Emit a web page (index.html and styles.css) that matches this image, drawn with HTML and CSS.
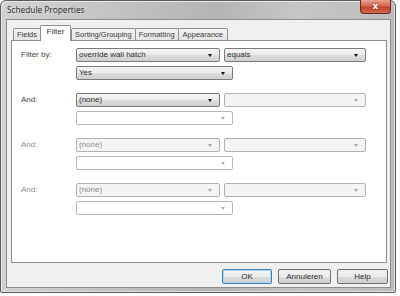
FILE: index.html
```html
<!DOCTYPE html>
<html>
<head>
<meta charset="utf-8">
<link rel="stylesheet" href="styles.css">
</head>
<body>
<div class="window">
  <div class="titlebar">
    <span class="title">Schedule Properties</span>
    <div class="close"><span>x</span></div>
  </div>
  <div class="client">
    <div class="tabs">
      <div class="tab">Fields</div>
      <div class="tab active">Filter</div>
      <div class="tab">Sorting/Grouping</div>
      <div class="tab">Formatting</div>
      <div class="tab">Appearance</div>
    </div>
    <div class="panel">
      <div class="group">
        <div class="label">Filter by:</div>
        <div class="combo c1"><span>override wall hatch</span><i class="arr"></i></div>
        <div class="combo c2"><span>equals</span><i class="arr"></i></div>
        <div class="combo box"><span>Yes</span><i class="arr"></i></div>
      </div>
      <div class="group">
        <div class="label">And:</div>
        <div class="combo c1"><span>(none)</span><i class="arr"></i></div>
        <div class="combo c2 dis"><span></span><i class="arr"></i></div>
        <div class="combo box edit"><span></span><i class="arr"></i></div>
      </div>
      <div class="group off">
        <div class="label">And:</div>
        <div class="combo c1 dis"><span>(none)</span><i class="arr"></i></div>
        <div class="combo c2 dis"><span></span><i class="arr"></i></div>
        <div class="combo box edit"><span></span><i class="arr"></i></div>
      </div>
      <div class="group off">
        <div class="label">And:</div>
        <div class="combo c1 dis"><span>(none)</span><i class="arr"></i></div>
        <div class="combo c2 dis"><span></span><i class="arr"></i></div>
        <div class="combo box edit"><span></span><i class="arr"></i></div>
      </div>
    </div>
    <div class="buttons">
      <div class="btn def">OK</div>
      <div class="btn wide">Annuleren</div>
      <div class="btn">Help</div>
    </div>
  </div>
</div>
</body>
</html>
```

FILE: styles.css
```css
html, body {
  margin: 0;
  padding: 0;
  background: #ffffff;
}
body {
  width: 400px;
  height: 296px;
  overflow: hidden;
  font-family: "Liberation Sans", Arial, sans-serif;
  font-size: 8px;
  color: #444444;
}
.window {
  width: 396px;
  height: 293px;
  box-sizing: border-box;
  border: 1px solid #5c5c5c;
  border-radius: 6px 6px 2px 2px;
  background: linear-gradient(to right, #d2d2d2 0%, #c2c2c2 30%, #b4b4b4 55%, #c6c6c6 75%, #bdbdbd 100%);
  box-shadow: inset 1px 1px 0 #e8e8e8, inset -1px -1px 0 #e0e0e0;
  padding: 0 4px 4px 5px;
  display: flex;
  flex-direction: column;
}
.titlebar {
  height: 19px;
  display: flex;
  align-items: flex-start;
  justify-content: space-between;
}
.title {
  font-family: "Open Sans", "Liberation Sans", sans-serif;
  font-size: 8.3px;
  color: #1e1e1e;
  padding: 3px 0 0 1px;
  text-shadow: 0 0 3px #eeeeee;
}
.close {
  width: 31px;
  height: 14px;
  margin-top: -1px;
  box-sizing: border-box;
  border: 1px solid #6b2a20;
  border-top: none;
  border-radius: 0 0 4px 4px;
  background: linear-gradient(to bottom, #e8a18f 0%, #d46a52 45%, #c2432a 55%, #cf6a4f 100%);
  display: flex;
  align-items: center;
  justify-content: center;
}
.close span {
  color: #ffffff;
  font-family: "DejaVu Sans", sans-serif;
  font-weight: bold;
  font-size: 9px;
  line-height: 9px;
  text-shadow: 0 0 2px #5a1a10;
}
.client {
  flex: 1;
  background: #f0f0f0;
  border: 1px solid #8c8c8c;
  padding: 5px 3px 3px 4px;
  display: flex;
  flex-direction: column;
}
.tabs {
  display: flex;
  align-items: flex-end;
  height: 15px;
  padding-left: 2px;
  position: relative;
  z-index: 1;
}
.tab {
  height: 12px;
  box-sizing: border-box;
  border: 1px solid #8e8f8f;
  border-bottom: none;
  margin-left: -1px;
  padding: 0 3px;
  background: linear-gradient(to bottom, #f4f4f4, #e4e4e4);
  font-size: 7.5px;
  line-height: 11px;
  color: #3a3a3a;
  border-radius: 2px 2px 0 0;
}
.tab:first-child {
  margin-left: 0;
  width: 28px;
  text-align: center;
  padding: 0;
}
.tab.active {
  height: 16px;
  margin-bottom: -1px;
  width: 31px;
  text-align: center;
  padding: 0;
  background: #ffffff;
  line-height: 12px;
  font-size: 8px;
}
.tab.active + .tab { margin-left: 0; }
.tab:last-child { padding: 0 4px; }
.panel {
  height: 223px;
  box-sizing: border-box;
  background: #ffffff;
  border: 1px solid #898c95;
  padding: 7px 0 0 9px;
  display: flex;
  flex-direction: column;
  gap: 13px;
}
.group {
  display: grid;
  grid-template-columns: 51px 144px 142px;
  column-gap: 4px;
  row-gap: 4px;
}
.label {
  line-height: 14px;
  color: #444444;
}
.off .label { color: #8d8d8d; }
.combo {
  height: 14px;
  box-sizing: border-box;
  border: 1px solid #7a7a7a;
  border-radius: 2px;
  background: linear-gradient(to bottom, #f3f3f3 0%, #ebebeb 50%, #dddddd 51%, #cfcfcf 100%);
  display: flex;
  align-items: center;
  justify-content: space-between;
  padding: 0 7px 0 2px;
  color: #2a2a2a;
  line-height: 12px;
}
.combo .arr {
  width: 0;
  height: 0;
  border-left: 2.5px solid transparent;
  border-right: 2.5px solid transparent;
  border-top: 3px solid #111111;
}
.combo.dis {
  border-color: #adb2b5;
  background: #f4f4f4;
  color: #8d8d8d;
}
.combo.dis .arr { border-top-color: #a6a6a6; }
.box {
  grid-column: 2 / 4;
  width: 157px;
}
.combo.edit {
  background: #ffffff;
  border-color: #b4b8bb;
}
.combo.edit .arr { border-top-color: #b0b0b0; }
.buttons {
  flex: 1;
  display: flex;
  justify-content: flex-end;
  align-items: flex-start;
  gap: 6px;
  padding-top: 6px;
  margin-right: -1px;
}
.btn {
  width: 51px;
  height: 15px;
  box-sizing: border-box;
  border: 1px solid #707070;
  border-radius: 2px;
  background: linear-gradient(to bottom, #f2f2f2 0%, #ebebeb 50%, #dddddd 51%, #cfcfcf 100%);
  text-align: center;
  line-height: 13px;
  font-size: 8px;
  color: #2a2a2a;
}
.btn.def {
  width: 50px;
  border-color: #3c7fb1;
  box-shadow: inset 0 0 0 1px #a9d7f3;
}
.btn.wide { width: 53px; }
```
